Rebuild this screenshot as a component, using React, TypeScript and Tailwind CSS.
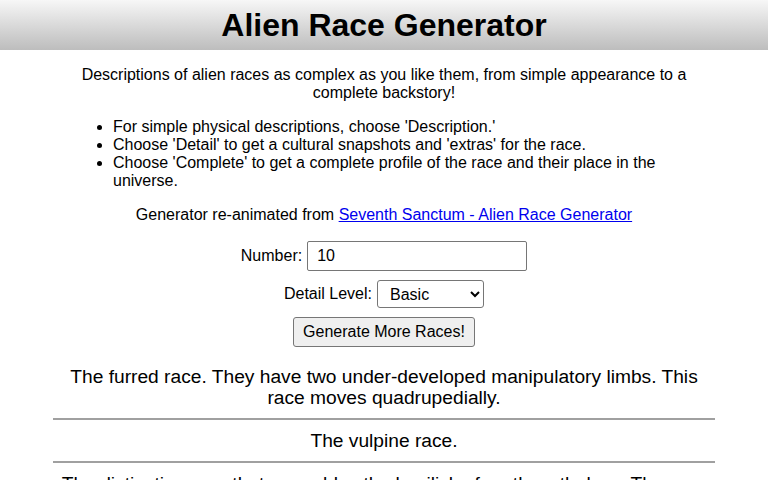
import React from 'react';

const races = [
  'The furred race. They have two under-developed manipulatory limbs. This race moves quadrupedially.',
  'The vulpine race.',
  'The distinctive race that resembles the basilisk of earth mythology. The race is known for its patience.',
];

const App: React.FC = () => {
  return (
    <div className="min-h-screen bg-white text-black font-['Liberation_Sans',Arial,sans-serif] text-base">
      <header className="h-[50px] flex items-center justify-center bg-gradient-to-b from-[#f7f7f7] to-[#bdbdbd]">
        <h1 className="text-[32px] font-bold leading-none">Alien Race Generator</h1>
      </header>

      <main className="mx-auto w-[662px] pt-4">
        <section className="px-5">
          <p className="text-center leading-[18px]">
            Descriptions of alien races as complex as you like them, from simple appearance to a complete backstory!
          </p>
          <ul className="list-disc pl-10 mt-4 leading-[18px]">
            <li>For simple physical descriptions, choose 'Description.'</li>
            <li>Choose 'Detail' to get a cultural snapshots and 'extras' for the race.</li>
            <li>Choose 'Complete' to get a complete profile of the race and their place in the universe.</li>
          </ul>
          <p className="text-center mt-4 leading-[18px]">
            Generator re-animated from{' '}
            <a href="#" className="text-[#0000ee] underline">Seventh Sanctum - Alien Race Generator</a>
          </p>
        </section>

        <form className="flex flex-col items-center gap-[9px] mt-[17px]" onSubmit={(e) => e.preventDefault()}>
          <label className="flex items-center gap-[5px]">
            <span>Number:</span>
            <input
              type="text"
              defaultValue="10"
              className="w-[220px] h-[30px] px-[9px] border border-[#767676] rounded-[2px] bg-white"
            />
          </label>
          <label className="flex items-center gap-[5px]">
            <span>Detail Level:</span>
            <select
              defaultValue="basic"
              className="w-[107px] h-[28px] pl-2 pr-1 border border-[#767676] rounded-[3px] bg-white appearance-auto"
            >
              <option value="basic">Basic</option>
              <option value="detail">Detail</option>
              <option value="complete">Complete</option>
            </select>
          </label>
          <button
            type="submit"
            className="w-[182px] h-[30px] border border-[#767676] rounded-[3px] bg-[#efefef]"
          >
            Generate More Races!
          </button>
        </form>

        <div className="mt-[9px]">
          {races.map((r, i) => (
            <div key={i} className="py-[10px] border-b-2 border-b-[#a0a0a0] text-center text-[19.2px] leading-[21px]">
              {r}
            </div>
          ))}
        </div>
      </main>
    </div>
  );
};

export default App;
